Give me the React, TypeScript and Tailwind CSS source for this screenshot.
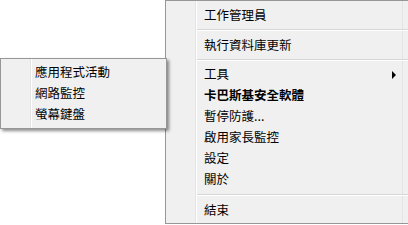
const FONT = "font-['Microsoft_JhengHei','Noto_Sans_CJK_TC',sans-serif]";

function Item({ label, bold, arrow }: { label: string; bold?: boolean; arrow?: boolean }) {
  return (
    <div className="relative flex h-[21px] items-center pl-[38px] pr-4">
      <span className={`text-[12.5px] leading-none text-black ${bold ? 'font-bold' : ''}`}>{label}</span>
      {arrow && (
        <span className="absolute right-[12px] top-[7px] h-0 w-0 border-y-[4px] border-l-[4px] border-y-transparent border-l-black" />
      )}
    </div>
  );
}

function Sep({ top, bottom }: { top: number; bottom: number }) {
  return (
    <div style={{ paddingTop: top, paddingBottom: bottom }} className="pl-[31px]">
      <div className="h-px bg-[#d7d7d7]" />
      <div className="h-px bg-white" />
    </div>
  );
}

export default function App() {
  return (
    <div className={`relative flex h-[225px] w-[408px] justify-end overflow-hidden bg-white ${FONT}`}>
      {/* main menu */}
      <div className="relative h-[224px] w-[243px] border-b border-l border-t border-[#979797] bg-[#f0f0f0] pt-[3px]">
        <div className="absolute bottom-0 left-[29px] top-0 w-px bg-[#e2e3e3]" />
        <div className="absolute bottom-0 left-[30px] top-0 w-px bg-white" />
        <div className="absolute bottom-0 right-[5px] top-0 w-px bg-[#e4e4e4]" />
        <div className="relative">
          <div className="flex h-[22px] items-center pl-[38px]">
            <span className="text-[12.5px] leading-none text-black">工作管理員</span>
          </div>
          <Sep top={3} bottom={3} />
          <div className="flex h-[22px] items-center pl-[38px]">
            <span className="text-[12.5px] leading-none text-black">執行資料庫更新</span>
          </div>
          <Sep top={3} bottom={3} />
          <Item label="工具" arrow />
          <Item label="卡巴斯基安全軟體" bold />
          <Item label="暫停防護..." />
          <Item label="啟用家長監控" />
          <Item label="設定" />
          <Item label="關於" />
          <Sep top={4} bottom={3} />
          <div className="flex h-[22px] items-center pl-[38px]">
            <span className="text-[12.5px] leading-none text-black">結束</span>
          </div>
        </div>
      </div>

      {/* submenu */}
      <div className="absolute left-0 top-[58px] h-[71px] w-[167px] border border-[#979797] bg-[#f0f0f0] pt-[3px] shadow-[2px_2px_3px_rgba(0,0,0,0.45)]">
        <div className="absolute bottom-0 left-[29px] top-0 w-px bg-[#e2e3e3]" />
        <div className="absolute bottom-0 left-[30px] top-0 w-px bg-white" />
        <div className="relative">
          <div className="flex h-[21px] items-center pl-[34px]">
            <span className="text-[12.5px] leading-none text-black">應用程式活動</span>
          </div>
          <div className="flex h-[21px] items-center pl-[34px]">
            <span className="text-[12.5px] leading-none text-black">網路監控</span>
          </div>
          <div className="flex h-[21px] items-center pl-[34px]">
            <span className="text-[12.5px] leading-none text-black">螢幕鍵盤</span>
          </div>
        </div>
      </div>
    </div>
  );
}
